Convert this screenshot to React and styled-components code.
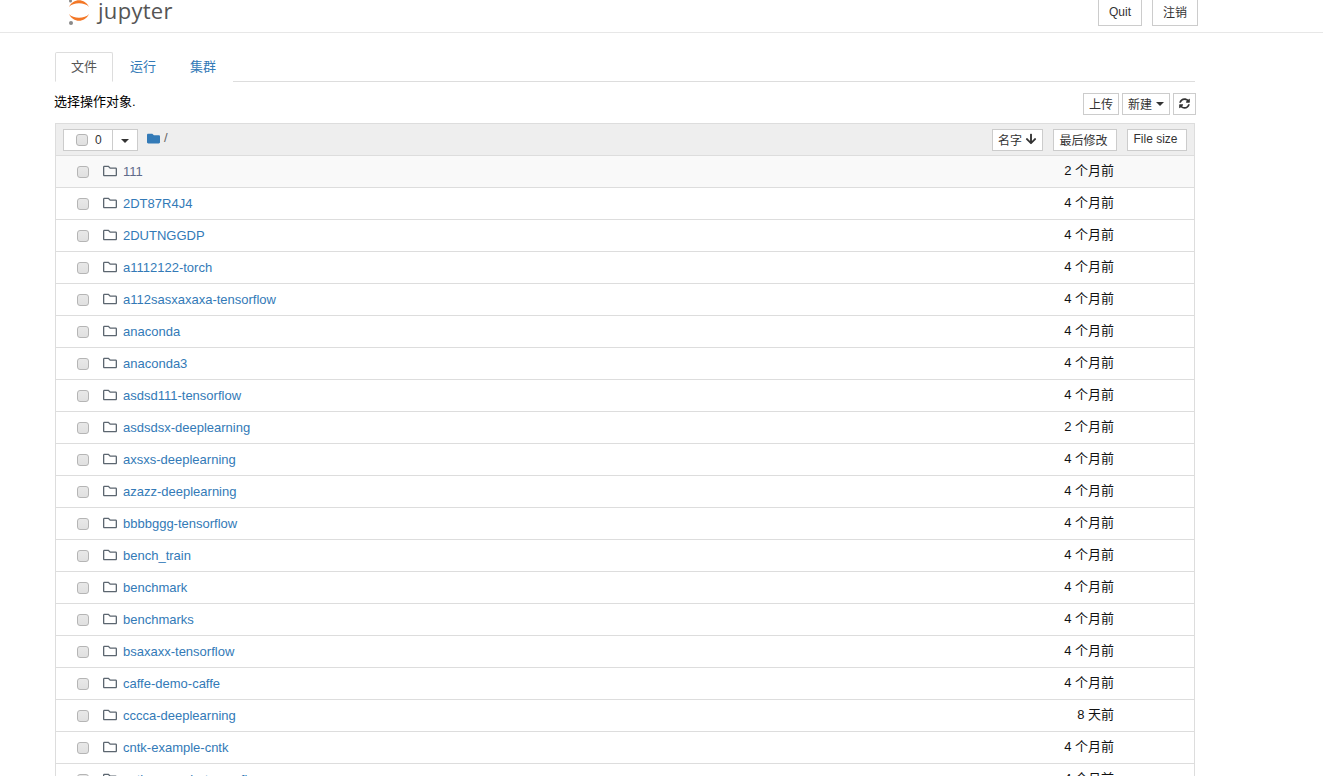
import React from 'react'
import styled, { createGlobalStyle } from 'styled-components'
import { FaRegFolder, FaFolder, FaArrowDown, FaSyncAlt } from 'react-icons/fa'

const GlobalStyle = createGlobalStyle`
  html, body {
    margin: 0;
    padding: 0;
    height: 776px;
    overflow: hidden;
    background: #fff;
    font-family: "Liberation Sans", "Noto Sans CJK SC", sans-serif;
    font-size: 13px;
    color: #000;
  }
  * { box-sizing: border-box; }
`

const Header = styled.header`
  height: 33px;
  border-bottom: 1px solid #e7e7e7;
  padding: 0 125px 0 68px;
  display: flex;
  justify-content: space-between;
  align-items: flex-start;
`

const Logo = styled.svg`
  display: block;
  flex: none;
  width: 22px;
  height: 26px;
`

const LogoText = styled.span`
  font-family: "Open Sans", sans-serif;
  font-size: 22px;
  line-height: 20px;
  color: #555;
  margin-left: 8px;
  letter-spacing: 0.3px;
`

const Brand = styled.div`
  display: flex;
  align-items: flex-start;
`

const HeaderButtons = styled.div`
  display: flex;
  gap: 10px;
`

const HeaderButton = styled.button`
  width: ${(p) => p.$w}px;
  height: 27px;
  margin-top: -1px;
  padding: 0 0 2px;
  background: #fff;
  border: 1px solid #ccc;
  font: inherit;
  font-size: 12px;
  color: #333;
`

const Main = styled.main`
  width: 1140px;
  margin-left: 55px;
`

const Tabs = styled.div`
  margin-top: 19px;
  height: 30px;
  display: flex;
  border-bottom: 1px solid #ddd;
`

const Tab = styled.div`
  width: ${(p) => (p.$active ? 58 : 60)}px;
  height: 30px;
  text-align: center;
  line-height: 28px;
  color: ${(p) => (p.$active ? '#555' : '#337ab7')};
  background: #fff;
  border: 1px solid ${(p) => (p.$active ? '#ddd' : 'transparent')};
  border-bottom: ${(p) => (p.$active ? '1px solid #fff' : 'none')};
  border-radius: 2px 2px 0 0;
`

const ToolRow = styled.div`
  height: 41px;
  display: flex;
  justify-content: space-between;
  align-items: flex-start;
  padding-top: 11px;
`

const Hint = styled.div`
  margin-left: -1px;
  line-height: 18px;
`

const ToolButtons = styled.div`
  display: flex;
  gap: 3px;
  margin-right: -1px;
`

const SmallButton = styled.button`
  width: ${(p) => p.$w}px;
  height: 22px;
  background: #fff;
  border: 1px solid #ccc;
  font: inherit;
  font-size: 12px;
  color: #333;
  padding: 0 ${(p) => p.$nudge || 0}px 2px 0;
  display: flex;
  align-items: center;
  justify-content: center;
  gap: ${(p) => p.$gap || 0}px;
`

const Caret = styled.span`
  width: 0;
  height: 0;
  margin-top: 2px;
  border-left: 4px solid transparent;
  border-right: 4px solid transparent;
  border-top: 4px solid #333;
`

const Panel = styled.section`
  border: 1px solid #ddd;
  border-bottom: none;
`

const PanelHead = styled.div`
  height: 32px;
  background: #eee;
  border-bottom: 1px solid #ddd;
  display: flex;
  align-items: flex-start;
  padding: 5px 7px 0;
`

const Picker = styled.div`
  width: 75px;
  height: 22px;
  background: #fff;
  border: 1px solid #ccc;
  display: flex;
  align-items: center;
`

const PickerLeft = styled.div`
  width: 49px;
  height: 100%;
  border-right: 1px solid #ccc;
  display: flex;
  align-items: center;
  padding-left: 12px;
  gap: 7px;
  font-size: 12px;
  color: #333;
`

const PickerCaret = styled.div`
  flex: 1;
  display: flex;
  justify-content: center;
`

const Check = styled.span`
  display: block;
  flex: none;
  width: 12px;
  height: 12px;
  border: 1px solid #b5b5b5;
  border-radius: 3px;
  background: linear-gradient(#e8e8e8, #e0e0e0);
`

const Crumb = styled.div`
  margin-left: 9px;
  display: flex;
  align-items: center;
  gap: 4px;
  height: 18px;
  color: #337ab7;
  font-size: 13px;
  & > span { color: #666; margin-top: -1px; }
`

const Sorters = styled.div`
  margin-left: auto;
  display: flex;
  gap: 10px;
`

const Row = styled.div`
  height: 32px;
  display: flex;
  align-items: center;
  border-bottom: 1px solid #ddd;
  background: ${(p) => (p.$first ? '#f9f9f9' : '#fff')};
  padding-left: 21px;
`

const RowIcon = styled.span`
  display: flex;
  margin-left: 14px;
  margin-top: -2px;
  color: #5c6670;
  font-size: 14px;
`

const Name = styled.a`
  margin-left: 6px;
  color: ${(p) => (p.$visited ? '#5f6b8a' : '#337ab7')};
  text-decoration: none;
  line-height: 18px;
`

const Modified = styled.div`
  margin-left: auto;
  width: 120px;
  padding-right: 80px;
  flex: none;
  white-space: nowrap;
  display: flex;
  justify-content: flex-end;
  color: #111;
  margin-top: -4px;
`

const files = [
  ['111', '2 个月前'],
  ['2DT87R4J4', '4 个月前'],
  ['2DUTNGGDP', '4 个月前'],
  ['a1112122-torch', '4 个月前'],
  ['a112sasxaxaxa-tensorflow', '4 个月前'],
  ['anaconda', '4 个月前'],
  ['anaconda3', '4 个月前'],
  ['asdsd111-tensorflow', '4 个月前'],
  ['asdsdsx-deeplearning', '2 个月前'],
  ['axsxs-deeplearning', '4 个月前'],
  ['azazz-deeplearning', '4 个月前'],
  ['bbbbggg-tensorflow', '4 个月前'],
  ['bench_train', '4 个月前'],
  ['benchmark', '4 个月前'],
  ['benchmarks', '4 个月前'],
  ['bsaxaxx-tensorflow', '4 个月前'],
  ['caffe-demo-caffe', '4 个月前'],
  ['cccca-deeplearning', '8 天前'],
  ['cntk-example-cntk', '4 个月前'],
  ['cntk-example-tensorflow', '4 个月前'],
]

export default function App() {
  return (
    <>
      <GlobalStyle />
      <Header>
        <Brand>
          <Logo viewBox="0 0 22 26">
            <path d="M1 7 C5 -2 17 -2 21 7 C17 2 5 2 1 7 Z" fill="#f37726" />
            <path d="M1 14 C5 23 17 23 21 14 C17 19 5 19 1 14 Z" fill="#f37726" />
            <circle cx="3" cy="23" r="2" fill="#8a8a8a" />
            <circle cx="2.5" cy="1" r="1.5" fill="#8a8a8a" />
          </Logo>
          <LogoText>jupyter</LogoText>
        </Brand>
        <HeaderButtons>
          <HeaderButton $w={44}>Quit</HeaderButton>
          <HeaderButton $w={46}>注销</HeaderButton>
        </HeaderButtons>
      </Header>
      <Main>
        <Tabs>
          <Tab $active>文件</Tab>
          <Tab>运行</Tab>
          <Tab>集群</Tab>
        </Tabs>
        <ToolRow>
          <Hint>选择操作对象.</Hint>
          <ToolButtons>
            <SmallButton $w={36}>上传</SmallButton>
            <SmallButton $w={48} $gap={4}>新建<Caret /></SmallButton>
            <SmallButton $w={23}><FaSyncAlt size={11} /></SmallButton>
          </ToolButtons>
        </ToolRow>
        <Panel>
          <PanelHead>
            <Picker>
              <PickerLeft><Check />0</PickerLeft>
              <PickerCaret><Caret /></PickerCaret>
            </Picker>
            <Crumb><FaFolder size={13} /><span>/</span></Crumb>
            <Sorters>
              <SmallButton $w={51} $gap={3}>名字<FaArrowDown size={12} /></SmallButton>
              <SmallButton $w={64} $nudge={3}>最后修改</SmallButton>
              <SmallButton $w={60} $nudge={3}>File size</SmallButton>
            </Sorters>
          </PanelHead>
          {files.map(([name, time], i) => (
            <Row key={name} $first={i === 0}>
              <Check />
              <RowIcon><FaRegFolder /></RowIcon>
              <Name href="#" $visited={i === 0}>{name}</Name>
              <Modified>{time}</Modified>
            </Row>
          ))}
        </Panel>
      </Main>
    </>
  )
}
